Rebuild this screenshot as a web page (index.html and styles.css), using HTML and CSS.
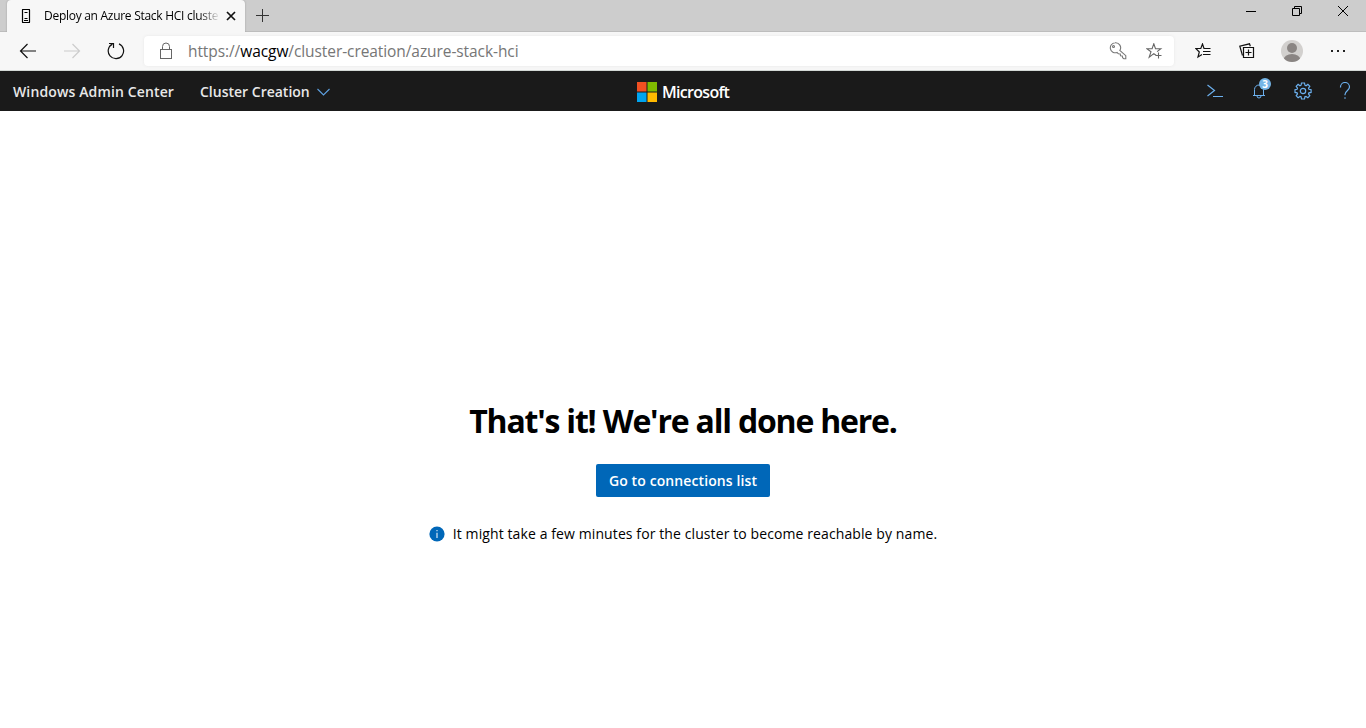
FILE: index.html
```html
<!DOCTYPE html>
<html lang="en">
<head>
<meta charset="utf-8">
<title>Deploy an Azure Stack HCI cluster</title>
<link rel="stylesheet" href="styles.css">
</head>
<body>
<div class="tabstrip">
  <div class="tab">
    <svg class="tab-icon" width="10" height="14" viewBox="0 0 10 14" fill="none" stroke="#000"><rect x="1.5" y=".5" width="7" height="13" rx=".5" stroke-width="1.2"/><path d="M3.500 3.500h3M3.500 9.500h3M3 11.500h4"/></svg>
    <span class="tab-title">Deploy an Azure Stack HCI cluster</span>
    <svg class="tab-close" width="10" height="10" viewBox="0 0 10 10" stroke="#111" stroke-width="1.7"><path d="M1 1l8 8M9 1l-8 8"/></svg>
  </div>
  <svg class="new-tab" width="14" height="14" viewBox="0 0 14 14" stroke="#333"><path d="M6.5 0v13M0 6.5h13"/></svg>
  <div class="window-controls">
    <span class="control"><svg width="12" height="12" viewBox="0 0 12 12" stroke="#000"><path d="M1 6.5h10"/></svg></span>
    <span class="control"><svg width="12" height="12" viewBox="0 0 12 12" fill="none" stroke="#000"><path d="M1.500 3.500h7v7h-7zM3.500 3.500v-2h7v7h-2"/></svg></span>
    <span class="control"><svg width="12" height="12" viewBox="0 0 12 12" stroke="#000"><path d="M1 1l10 10M11 1L1 11"/></svg></span>
  </div>
</div>
<div class="toolbar">
  <span class="tool"><svg width="18" height="16" viewBox="0 0 18 16" fill="none" stroke="#111" stroke-width="1.2"><path d="M17 8H1.500M8.500 1l-7 7 7 7"/></svg></span>
  <span class="tool"><svg width="18" height="16" viewBox="0 0 18 16" fill="none" stroke="#ccc" stroke-width="1.2"><path d="M1 8h15.500M9.500 1l7 7-7 7"/></svg></span>
  <span class="tool"><svg width="18" height="18" viewBox="0 0 18 18" fill="none" stroke="#111" stroke-width="1.2"><path d="M12 1.900A7.700 7.700 0 1 1 5.400 2.100M2 1.500h4.500V6"/></svg></span>
  <div class="address">
    <svg class="lock" width="14" height="18" viewBox="0 0 14 18" fill="none" stroke="#666"><rect x="1.500" y="7.500" width="11" height="9"/><path d="M3.500 7.500V4.500a3.500 3.500 0 0 1 7 0v3"/></svg>
    <span class="url">https://<b>wacgw</b>/cluster-creation/azure-stack-hci</span>
    <svg class="key" width="18" height="18" viewBox="0 0 18 18" fill="none" stroke="#777" stroke-width="1.100"><path d="M6 .8a5 5 0 1 0 2 9.700l1.500 1.300 1.800.2.200 1.800 1.800.2.300 1.800 1.200.9h2v-3l-6-5.200A5 5 0 0 0 6 .8z"/><circle cx="4.500" cy="4.500" r="1"/></svg>
    <svg class="star" width="17" height="17" viewBox="0 0 17 17" fill="none" stroke="#666" stroke-width="1.100"><path d="M10 12.200l-2.200-1.600-4.600 3.500L5 8.800.8 5.700h5.300L7.800.8l1.700 4.900h5.300l-3.700 2.900M12.500 9.500v6M9.500 12.500h6"/></svg>
  </div>
  <span class="tool tool-first"><svg width="16" height="16" viewBox="0 0 16 16" fill="none" stroke="#111" stroke-width="1.200"><path d="M15.500 5.500H9L7.500 1 5.800 5.500H.8l3.500 3.500-1.300 5L7 11.500M8 8.500h7.500M8 11.500h7.500"/></svg></span>
  <span class="tool"><svg width="16" height="16" viewBox="0 0 16 16" fill="none" stroke="#111"><path d="M4.500 4.500h10v10h-10zM9.500 6.500v6M6.500 9.500h6" stroke-width="1.200"/><path d="M3.500 12.500L.8 3.200 10.500.8l.8 2.500" stroke-width="1.200"/></svg></span>
  <span class="tool tool-wide"><svg width="22" height="22" viewBox="0 0 22 22"><defs><clipPath id="avatar"><circle cx="11" cy="11" r="11"/></clipPath></defs><circle cx="11" cy="11" r="11" fill="#d2d0ce"/><g fill="#8a8583" clip-path="url(#avatar)"><circle cx="11" cy="8" r="5"/><ellipse cx="11" cy="20" rx="8.500" ry="6"/></g></svg></span>
  <span class="tool tool-wide"><svg width="16" height="4" viewBox="0 0 16 4" fill="#222"><path d="M1 1h2v2H1zM7 1h2v2H7zM13 1h2v2h-2z"/></svg></span>
</div>
<header class="header">
  <div class="header-left">
    <span class="product">Windows Admin Center</span>
    <span class="solution">Cluster Creation</span>
    <svg class="chevron" width="13" height="8" viewBox="0 0 13 8" fill="none" stroke="#5ea0e0" stroke-width="1.100"><path d="M.5 1l6 6 6-6"/></svg>
  </div>
  <div class="brand">
    <svg width="20" height="20" viewBox="0 0 20 20"><path fill="#f25022" d="M0 0h9.500v9.500H0z"/><path fill="#7fba00" d="M10.500 0H20v9.500h-9.500z"/><path fill="#00a4ef" d="M0 10.500h9.500V20H0z"/><path fill="#ffb900" d="M10.500 10.500H20V20h-9.500z"/></svg>
    <span class="brand-name">Microsoft</span>
  </div>
  <div class="header-right">
    <span class="action"><svg width="18" height="14" viewBox="0 0 18 14" fill="none" stroke="#6cb0ee" stroke-width="1.200"><path d="M1.500 1l7 5.500-7 5.500M7 12.500h10"/></svg></span>
    <span class="action"><svg width="14" height="16" viewBox="0 0 14 16" fill="none" stroke="#6cb0ee"><path d="M1 12.500h12M2.500 12.500V6.500a4.500 4.500 0 0 1 9 0v6M5 13a2 2 0 0 0 4 0"/></svg><span class="badge">3</span></span>
    <span class="action"><svg width="18" height="18" viewBox="0 0 18 18" fill="none" stroke="#6cb0ee" stroke-width="1.200"><path d="M7.500 1h3l.4 2.200 1.100.5 1.900-1.300 1.900 1.900-1.300 1.900.4 1.100 2.200.4v2.700l-2.200.4-.4 1.100 1.300 1.900-1.900 1.900-1.900-1.300-1.100.4-.4 2.200h-3l-.4-2.200-1.100-.4-1.900 1.300-1.900-1.900 1.300-1.900-.4-1.100L1 10.400V7.700l2.100-.4.400-1.100-1.300-1.900 1.900-1.900L6 3.700l1.100-.5z"/><circle cx="9" cy="9" r="2.700"/></svg></span>
    <span class="action help"><svg width="12" height="18" viewBox="0 0 12 18" fill="none" stroke="#6cb0ee" stroke-width="1.200"><path d="M1.500 5.500V5a4.500 4.500 0 0 1 9 0c0 3.500-4.500 4-4.500 7.500v.8M6 15.300v1.500"/></svg></span>
  </div>
</header>
<main class="content">
  <h1 class="title">That's it! We're all done here.</h1>
  <button class="primary">Go to connections list</button>
  <div class="note">
    <svg width="16" height="16" viewBox="0 0 16 16"><circle cx="8" cy="8" r="7.600" fill="#0067b8"/><path d="M7.500 4h1v1.300h-1zM7.500 6.700h1V12h-1z" fill="#fff"/></svg>
    <span class="note-text">It might take a few minutes for the cluster to become reachable by name.</span>
  </div>
</main>
</body>
</html>
```
FILE: styles.css
```css
* { box-sizing: border-box; }
body {
  margin: 0;
  height: 728px;
  overflow: hidden;
  display: flex;
  flex-direction: column;
  background: #fff;
  color: #000;
  font-family: "Open Sans", "Noto Sans", sans-serif;
  white-space: nowrap;
}
svg { display: block; flex: none; }
.tabstrip {
  height: 32px;
  flex: none;
  display: flex;
  background: #cdcdcd;
  border-bottom: 1px solid #bdbdbd;
  padding-left: 7px;
}
.tab {
  width: 238px;
  height: 32px;
  display: flex;
  align-items: center;
  padding-left: 14px;
  background: #f7f7f7;
  border-radius: 4px 4px 0 0;
  box-shadow: 0 0 2px #999;
  clip-path: inset(0 -3px 0 -3px);
}
.tab-title {
  width: 174px;
  margin-left: 13px;
  overflow: hidden;
  font-size: 12px;
  letter-spacing: -.28px;
  line-height: 20px;
  -webkit-mask-image: linear-gradient(90deg, #000 155px, transparent 176px);
  mask-image: linear-gradient(90deg, #000 155px, transparent 176px);
}
.tab-close { margin-left: 8px; }
.new-tab { margin: 9px 0 0 11px; }
.window-controls { margin-left: auto; display: flex; height: 22px; }
.control { width: 46px; display: flex; align-items: center; justify-content: center; }
.toolbar {
  height: 39px;
  flex: none;
  display: flex;
  align-items: center;
  padding-left: 6px;
  background: #f7f7f7;
  border-bottom: 1px solid #d3d8d5;
}
.tool { width: 44px; display: flex; justify-content: center; }
.tool-first { margin-left: 7px; }
.tool-wide { width: 46px; }
.address {
  width: 1030px;
  height: 30px;
  margin-left: 6px;
  display: flex;
  align-items: center;
  padding: 0 11px 0 15px;
  background: #fff;
  border-radius: 4px;
  box-shadow: 0 0 3px #e6e6e6;
}
.url { margin-left: 15px; color: #767676; font-size: 15.5px; letter-spacing: -.08px; }
.url b { color: #000; font-weight: 400; }
.key { margin-left: auto; }
.star { margin-left: 19px; }
.header {
  height: 40px;
  flex: none;
  display: grid;
  grid-template-columns: 1fr auto 1fr;
  align-items: center;
  background: #1a1a1a;
  color: #e8e8e8;
}
.header-left { display: flex; align-items: center; padding-left: 13px; font-size: 14px; font-weight: 600; }
.product { width: 187px; letter-spacing: .13px; }
.solution { width: 117px; letter-spacing: 0; }
.chevron { margin-top: 1px; }
.brand { display: flex; align-items: center; gap: 5px; padding: 2px 0 0 2px; color: #fff; }
.brand-name { width: 69px; font-size: 16px; font-weight: 600; letter-spacing: -.7px; line-height: 20px; }
.header-right { display: flex; justify-content: flex-end; }
.action { position: relative; width: 44px; height: 40px; display: flex; align-items: center; justify-content: center; }
.help { width: 41px; padding-right: 2px; }
.badge {
  position: absolute;
  left: 22px;
  top: 7px;
  width: 12px;
  height: 12px;
  border-radius: 50%;
  background: #75b5e6;
  color: #fff;
  font-size: 10px;
  font-weight: 700;
  line-height: 12px;
  text-align: center;
}
.content { display: flex; flex-direction: column; align-items: center; padding-top: 288px; }
.title { margin: 0; font-size: 32px; font-weight: 700; line-height: 44px; letter-spacing: -1.2px; }
.primary {
  width: 174px;
  height: 33px;
  margin-top: 20.5px;
  padding: 0;
  border: 0;
  border-radius: 2px;
  background: #0067b8;
  color: #fff;
  font: 600 14px/33px "Open Sans", "Noto Sans", sans-serif;
  letter-spacing: .1px;
}
.note { display: flex; align-items: center; gap: 8px; margin-top: 27.5px; font-size: 14px; line-height: 20px; letter-spacing: .1px; }
```
